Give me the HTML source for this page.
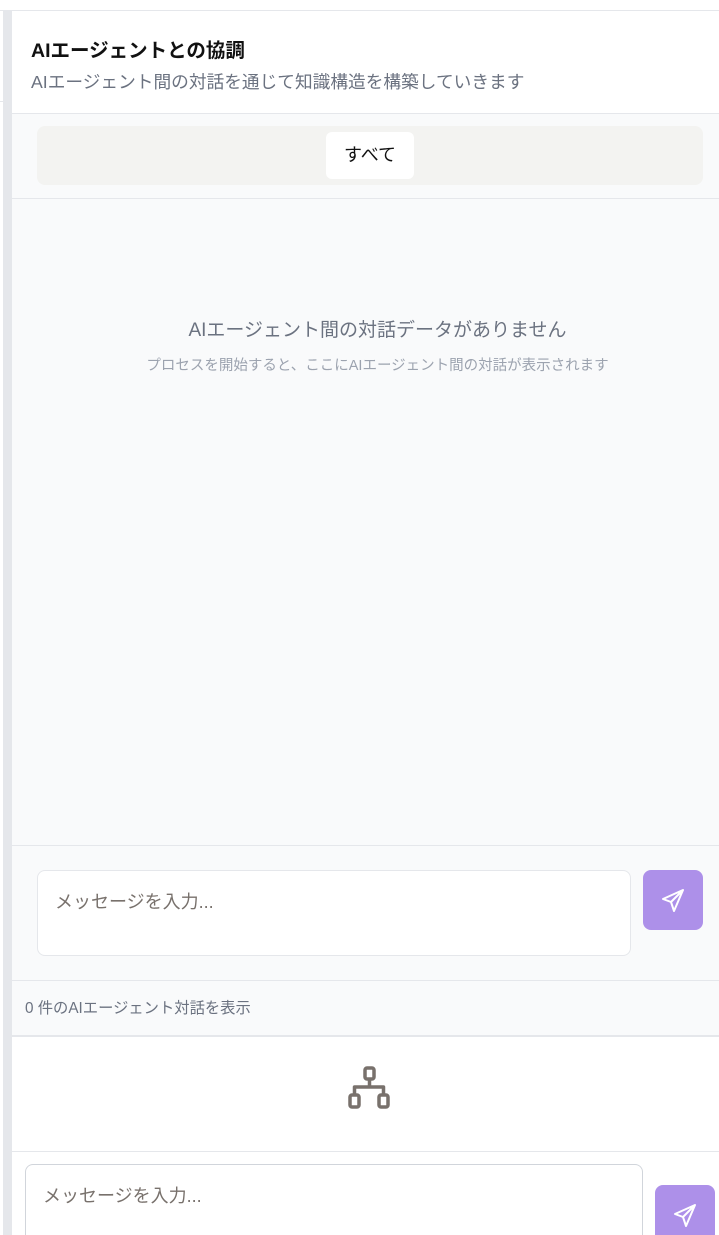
<!DOCTYPE html>
<html style="overflow:hidden;height:1235px"><head><meta charset="utf-8"><style>
*{box-sizing:border-box;margin:0;padding:0}
body{width:719px;height:1235px;overflow:hidden;background:#fff;font-family:"Liberation Sans","Noto Sans CJK JP",sans-serif;position:relative}
.abs{position:absolute}
</style></head><body>
<div class="abs" style="left:0;top:10px;width:719px;height:1px;background:#e5e7eb"></div>
<div class="abs" style="left:3px;top:11px;width:9px;height:1224px;background:#e5e7eb"></div>
<div class="abs" style="left:0;top:101px;width:3px;height:1px;background:#e5e7eb"></div>
<div class="abs" style="left:12px;top:11px;width:707px;height:103px;background:#fff;border-bottom:1px solid #e5e7eb"></div>
<div class="abs" style="left:31px;top:34px;font-size:19.5px;font-weight:bold;color:#111">AIエージェントとの協調</div>
<div class="abs" style="left:31px;top:68px;font-size:17.7px;color:#6b7280">AIエージェント間の対話を通じて知識構造を構築していきます</div>
<div class="abs" style="left:12px;top:114px;width:707px;height:731px;background:#f9fafb"></div>
<div class="abs" style="left:12px;top:198px;width:707px;height:1px;background:#e5e7eb"></div>
<div class="abs" style="left:37px;top:126px;width:666px;height:59px;background:#f3f3f1;border-radius:8px"></div>
<div class="abs" style="left:326px;top:132px;width:88px;height:47px;background:#fff;border-radius:6px;font-size:18px;color:#111;text-align:center;line-height:47px">すべて</div>
<div class="abs" style="left:24px;top:315px;width:707px;text-align:center;font-size:19px;color:#6b7280">AIエージェント間の対話データがありません</div>
<div class="abs" style="left:24px;top:354px;width:707px;text-align:center;font-size:14.5px;color:#9ca3af">プロセスを開始すると、ここにAIエージェント間の対話が表示されます</div>
<div class="abs" style="left:12px;top:845px;width:707px;height:190px;background:#f9fafb;border-top:1px solid #e5e7eb"></div>
<div class="abs" style="left:37px;top:870px;width:594px;height:86px;background:#fff;border:1px solid #e5e7eb;border-radius:8px"></div>
<div class="abs" style="left:55px;top:888px;font-size:18px;color:#78716c">メッセージを入力...</div>
<div class="abs" style="left:643px;top:870px;width:60px;height:60px;background:#ad90e9;border-radius:8px">
<svg width="60" height="60" viewBox="0 0 60 60"><path d="M40 20L20 29l8 3 3 9z M40 20L28 32" fill="none" stroke="#fff" stroke-width="2" stroke-linejoin="round" stroke-linecap="round"/></svg></div>
<div class="abs" style="left:12px;top:980px;width:707px;height:1px;background:#e5e7eb"></div>
<div class="abs" style="left:25px;top:996px;font-size:15.3px;color:#6b7280">0 件のAIエージェント対話を表示</div>
<div class="abs" style="left:12px;top:1035px;width:707px;height:2px;background:#e5e7eb"></div>
<div class="abs" style="left:12px;top:1037px;width:707px;height:198px;background:#fff;border-top-left-radius:8px"></div>
<svg class="abs" style="left:346px;top:1064px" width="48" height="48" viewBox="0 0 48 48"><g fill="none" stroke="#78716c" stroke-width="3.5" stroke-linejoin="round"><rect x="19" y="4" width="9" height="11" rx="2"/><rect x="4" y="31" width="9" height="12" rx="2"/><rect x="33" y="31" width="9" height="12" rx="2"/><path d="M23.5 15v8M8.5 31v-8h29v8"/></g></svg>
<div class="abs" style="left:12px;top:1151px;width:707px;height:1px;background:#e5e7eb"></div>
<div class="abs" style="left:25px;top:1164px;width:618px;height:71px;background:#fff;border:1px solid #d1d5db;border-bottom:none;border-radius:8px 8px 0 0"></div>
<div class="abs" style="left:43px;top:1182px;font-size:18px;color:#78716c">メッセージを入力...</div>
<div class="abs" style="left:655px;top:1185px;width:60px;height:50px;background:#ad90e9;border-radius:8px 8px 0 0;overflow:hidden">
<svg width="60" height="60" viewBox="0 0 60 60"><path d="M40 20L20 29l8 3 3 9z M40 20L28 32" fill="none" stroke="#fff" stroke-width="2" stroke-linejoin="round" stroke-linecap="round"/></svg></div>
</body></html>
